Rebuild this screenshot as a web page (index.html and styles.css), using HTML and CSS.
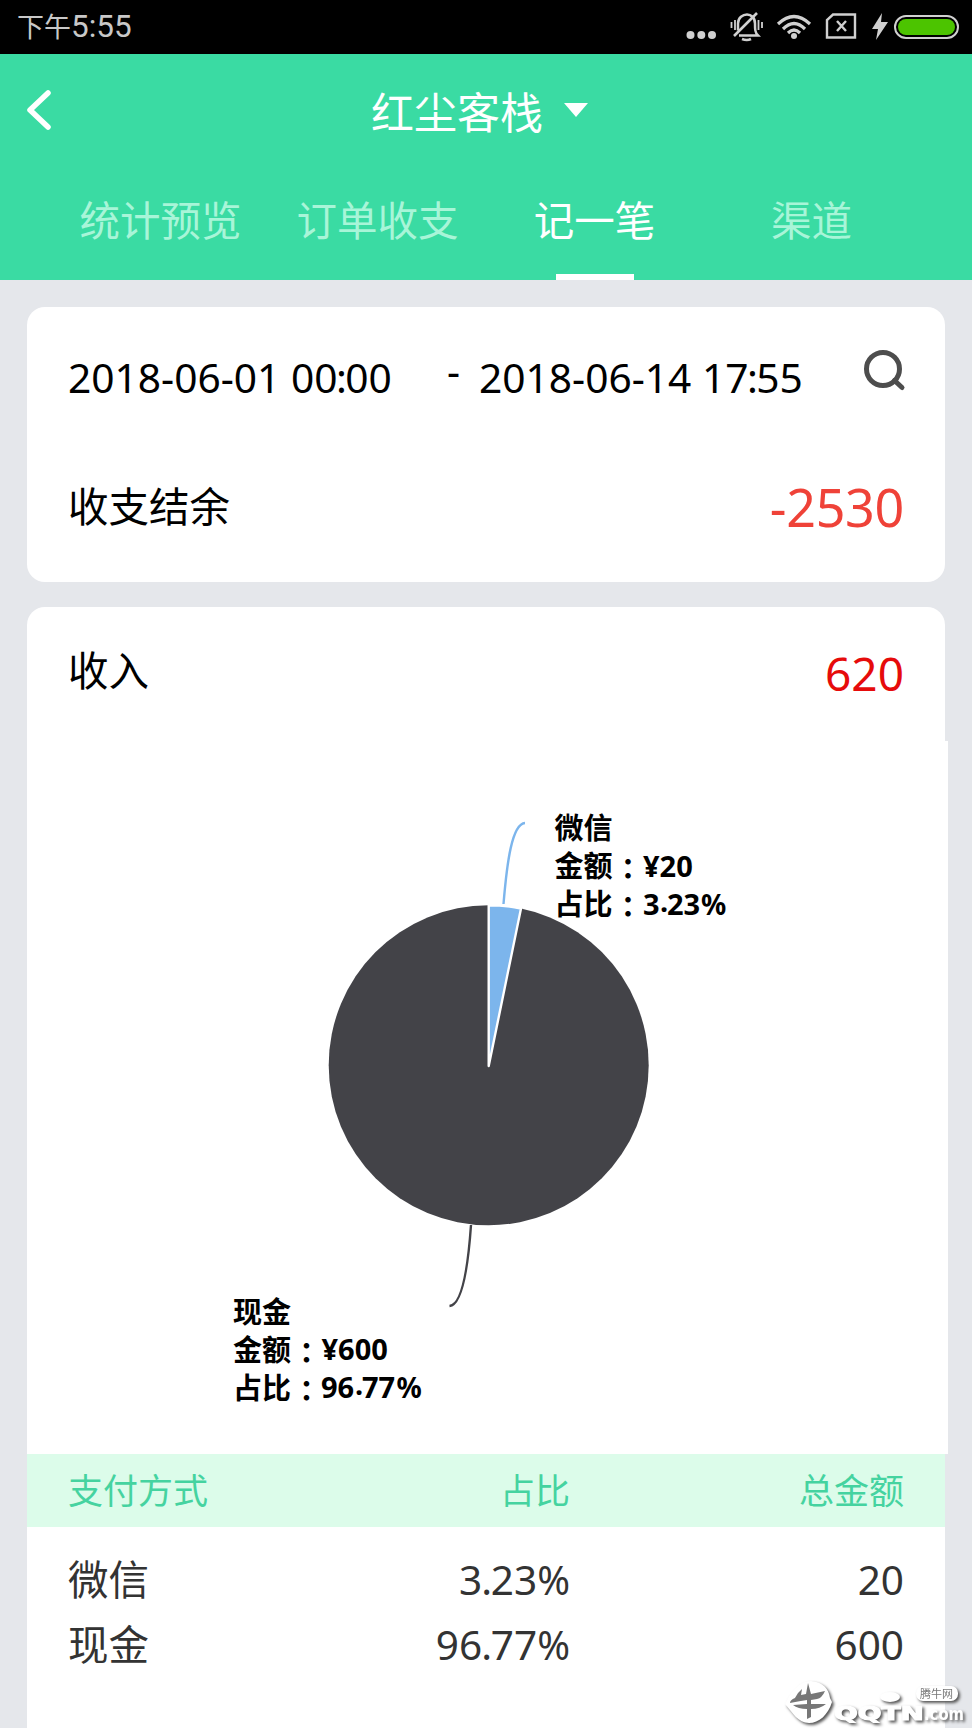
FILE: index.html
```html
<!DOCTYPE html>
<html lang="zh-CN">
<head>
<meta charset="utf-8">
<title>记一笔</title>
<link rel="stylesheet" href="styles.css">
</head>
<body>
<div class="status">
  <div class="clock"><span class="ampm">下午</span>5:55</div>
  <svg class="status-icons" width="290" height="54" viewBox="0 0 290 54">
    <g fill="#d0d0d0">
      <circle cx="8.5" cy="35" r="4"/><circle cx="19.3" cy="35" r="4"/><circle cx="30" cy="35" r="4"/>
      <circle cx="112" cy="36" r="3"/>
      <path d="M200 13 190 29h6l-2 11 12-18h-7z"/>
    </g>
    <g fill="none" stroke="#d0d0d0" stroke-width="2.500">
      <path d="M57 35.500h19c-3-3-3-6-3-12 0-6-4-9-8-9s-9 3-9 9v7"/>
      <path d="M52 36 75 13M60 39q5 2 9 0" stroke-width="2.600"/>
      <path d="M53 20v10M49.500 22v6M76.500 20v10M80 22v6" stroke-width="1.800"/>
      <path d="M96 24q16-15 32 0M101 29q11-11 22 0M106 33q6-6 12 0" stroke-width="3.200"/>
      <path d="M151 14.500h22v23h-28V20zM155 21l9 10M164 21l-9 10" stroke-width="2.400"/>
      <rect x="213" y="16" width="63" height="22" rx="11" stroke-width="2"/>
    </g>
    <rect x="216" y="19" width="57" height="16" rx="8" fill="#4cc400"/>
  </svg>
</div>
<header class="header">
  <div class="titlebar">
    <svg class="back" width="28" height="42" viewBox="0 0 28 42"><path d="M23 4 5 21l18 17" fill="none" stroke="#fff" stroke-width="5.500" stroke-linejoin="round" stroke-linecap="round"/></svg>
    <h1 class="title">红尘客栈</h1>
    <span class="caret"></span>
  </div>
  <nav class="tabs">
    <a class="tab">统计预览</a>
    <a class="tab">订单收支</a>
    <a class="tab active">记一笔</a>
    <a class="tab">渠道</a>
  </nav>
</header>
<main class="content">
  <section class="card summary">
    <div class="range">
      <span class="date">2018-06-01 00<i class="pt">:</i>00</span>
      <span class="dash">-</span>
      <span class="date">2018-06-14 17<i class="pt">:</i>55</span>
      <svg class="search" width="44" height="44" viewBox="0 0 44 44"><circle cx="20" cy="20" r="16.500" fill="none" stroke="#4d4d4d" stroke-width="5"/><path d="M31.500 31.500 39 38.500" stroke="#4d4d4d" stroke-width="5" stroke-linecap="round"/></svg>
    </div>
    <div class="balance"><span>收支结余</span><span class="net">-2530</span></div>
  </section>
  <section class="card income">
    <div class="income-head"><span class="name">收入</span><span class="total">620</span></div>
    <svg class="chart" width="921" height="713" viewBox="27 741 921 713">
      <circle cx="488.700" cy="1065.200" r="160" fill="#434348"/>
      <path d="M488.700 1066V905.200A160 160 0 0 1 521 908.500Z" fill="#7cb5ec" stroke="#fff" stroke-width="2.400" stroke-linejoin="round"/>
      <path d="M525 823C512 824 507 862 503.500 904" fill="none" stroke="#7cb5ec" stroke-width="2.400"/>
      <path d="M471 1225C468 1268 462 1305 449.500 1306" fill="none" stroke="#434348" stroke-width="2.400"/>
      <g class="label">
        <text x="554.500" y="839">微信</text>
        <text x="554.500" y="877">金额</text><text class="colon" x="613.500" y="880">：</text><text x="643" y="876.500">¥20</text>
        <text x="554.500" y="915">占比</text><text class="colon" x="613.500" y="918">：</text><text x="643" y="914.500">3</text><text x="660" y="912">.</text><text x="667" y="914.500">23</text><text class="pct" x="701" y="914.500">%</text>
        <text x="233" y="1322.500">现金</text>
        <text x="233" y="1360.500">金额</text><text class="colon" x="292" y="1363.500">：</text><text x="321.500" y="1359.500">¥600</text>
        <text x="233" y="1398.500">占比</text><text class="colon" x="292" y="1401.500">：</text><text x="321" y="1397.500">96</text><text x="355" y="1395">.</text><text x="362" y="1397.500">77</text><text class="pct" x="396.500" y="1397.500">%</text>
      </g>
    </svg>
    <div class="row thead"><span>支付方式</span><span>占比</span><span>总金额</span></div>
    <div class="rows">
      <div class="row"><span>微信</span><span class="rate">3<i class="pt">.</i>23<i class="pc">%</i></span><span>20</span></div>
      <div class="row"><span>现金</span><span class="rate">96<i class="pt">.</i>77<i class="pc">%</i></span><span>600</span></div>
    </div>
  </section>
</main>
<svg class="watermark" width="192" height="56" viewBox="780 1672 192 56">
  <g fill="#fff">
    <path d="M785 1704C792 1688 802 1681 811 1681c12 1 18 8 19 17l2 4c-4 13-13 21-23 21-11 0-16-10-24-19z"/>
    <text class="wm-main" x="834" y="1720" textLength="90" lengthAdjust="spacingAndGlyphs">QQTN</text>
    <text class="wm-com" x="924" y="1720" textLength="40" lengthAdjust="spacingAndGlyphs">.com</text>
    <ellipse cx="890" cy="1697" rx="10" ry="5"/>
    <rect x="916" y="1686" width="42" height="15" rx="7"/>
  </g>
  <path d="M795 1698q3-6 7-9l-1 6 5-1 2-11 3 11 14-3q-3 7-8 8l-6 1v4h15q-6 5-15 5v8l-4 2v-10q-9 0-14-4l14-1v-4q-7 1-17 3 0-3 5-5z" fill="#777"/>
  <text class="wm-cn" x="920" y="1698">腾牛网</text>
</svg>
</body>
</html>
```

FILE: styles.css
```css
* { box-sizing: border-box; }
body {
  margin: 0;
  width: 972px;
  height: 1728px;
  overflow: hidden;
  background: #e5e7eb;
  color: #000;
  font-family: "Noto Sans", "Noto Sans CJK SC", sans-serif;
  font-size: 40.5px;
}
i { font-style: normal; }
.status {
  display: flex;
  justify-content: space-between;
  height: 54px;
  padding-left: 17px;
  background: #000;
  color: #c8c8c8;
}
.clock { font: 31.5px/54px Roboto, "Noto Sans CJK SC", sans-serif; }
.ampm { font-size: 27px; }
.status-icons { display: block; }
.header { height: 226px; background: #3adba3; color: #fff; }
.titlebar { display: flex; align-items: center; height: 112px; padding-left: 25px; }
.back { margin-right: 318px; }
.title { margin: 0; padding-top: 5px; font-size: 43px; font-weight: 400; line-height: 60px; }
.caret {
  margin-left: 21px;
  border: 12px solid transparent;
  border-top: 14px solid #fff;
  border-bottom: 0;
}
.tabs { display: flex; height: 114px; padding-left: 52px; }
.tab {
  display: flex;
  flex-direction: column;
  align-items: center;
  justify-content: space-between;
  width: 217px;
  padding-top: 25px;
  font-size: 40.5px;
  line-height: 60px;
  color: #a8f5d8;
}
.active { color: #fff; }
.active::after { content: ""; width: 78px; height: 6px; background: #fff; }
.content { padding: 27px 27px 0; }
.card { width: 918px; background: #fff; border-radius: 18px; }
.summary { height: 275px; margin-bottom: 25px; padding: 35px 41px 0; }
.range { display: flex; height: 70px; line-height: 70px; }
.date { flex: none; width: 379px; white-space: nowrap; font-size: 40.7px; }
.date + .dash { flex: none; width: 32px; line-height: 58px; }
.dash + .date { width: 384px; }
.pt { display: inline-block; width: 7.7px; text-indent: -1.500px; }
.rate .pt { width: 8.7px; text-indent: -1px; }
.pc { font-size: 39.5px; }
.search { flex: none; margin-top: 7px; }
.balance, .income-head { display: flex; justify-content: space-between; }
.balance { height: 70px; margin-top: 60px; line-height: 70px; }
.net { color: #ef4238; font-size: 52px; letter-spacing: -0.300px; }
.income { height: 1140px; }
.income-head { height: 134px; padding: 31px 41px 0; line-height: 70px; }
.name { line-height: 66px; }
.total { color: #e60b0b; font-size: 46px; }
.chart { display: block; background: #fff; }
.label { font-size: 29px; font-weight: 700; }
.colon { font-family: "Noto Sans CJK TC", sans-serif; }
.pct { font-size: 28px; }
.row {
  display: grid;
  grid-template-columns: 200px 302px 334px;
  height: 65px;
  padding: 0 41px;
  line-height: 65px;
  color: #333;
}
.row span + span { text-align: right; }
.thead { height: 73px; line-height: 73px; background: #dcfcea; color: #45d3a0; font-size: 35px; }
.rows { padding-top: 20px; }
.watermark { position: absolute; right: 0; bottom: 0; filter: drop-shadow(2px 2px 1.500px #555); }
.wm-main { font: 700 20px "DejaVu Sans", sans-serif; stroke: #fff; stroke-width: 1.200px; }
.wm-com { font: 700 18px "DejaVu Sans", sans-serif; }
.wm-cn { font: 11px "Noto Sans CJK SC", sans-serif; fill: #777; }
```
